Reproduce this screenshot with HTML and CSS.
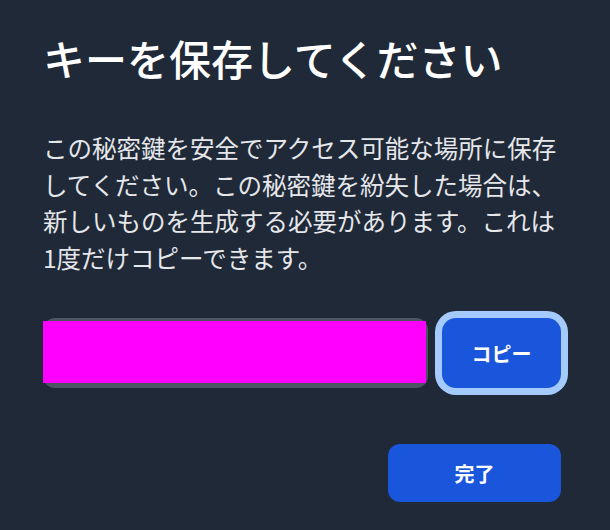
FILE: index.html
```html
<!DOCTYPE html>
<html lang="ja">
<head>
<meta charset="utf-8">
<link rel="stylesheet" href="styles.css">
</head>
<body>
<div class="dialog">
  <h1 class="title">キーを保存してください</h1>
  <p class="desc">この秘密鍵を安全でアクセス可能な場所に保存してください。この秘密鍵を紛失した場合は、新しいものを生成する必要があります。これは1度だけコピーできます。</p>
  <div class="key-row">
    <div class="key-field"><span class="key-redact"></span></div>
    <button class="btn btn-copy" type="button">コピー</button>
  </div>
  <div class="actions">
    <button class="btn btn-done" type="button">完了</button>
  </div>
</div>
</body>
</html>
```

FILE: styles.css
```css
html, body {
  margin: 0;
  padding: 0;
  background: #1f2937;
}
body {
  width: 610px;
  height: 530px;
  overflow: hidden;
  font-family: "Noto Sans CJK JP", "Noto Sans", sans-serif;
}
.dialog {
  padding: 33px 49px 0 43px;
  display: flex;
  flex-direction: column;
}
.title {
  margin: 0;
  font-size: 42px;
  line-height: 50px;
  font-weight: 500;
  color: #ffffff;
}
.desc {
  margin: 47px 0 0 0;
  font-size: 24.5px;
  line-height: 36.6px;
  font-weight: 400;
  color: #e5e7eb;
}
.key-row {
  margin-top: 42px;
  display: flex;
  gap: 14px;
  height: 70px;
}
.key-field {
  flex: 1;
  background: #4b5563;
  border-radius: 12px;
  padding: 3px 2px 5px 0;
  display: flex;
}
.key-redact {
  flex: 1;
  background: #ff00ff;
}
.btn {
  border: none;
  margin: 0;
  font-family: "Noto Sans CJK JP", "Noto Sans", sans-serif;
  font-size: 20px;
  font-weight: 700;
  color: #ffffff;
  background: #1a56db;
  padding: 0;
  cursor: pointer;
}
.btn-copy {
  width: 119px;
  border-radius: 14px;
  box-shadow: 0 0 0 7px #a4cafe;
}
.actions {
  margin-top: 56px;
  display: flex;
  justify-content: flex-end;
}
.btn-done {
  width: 173px;
  height: 58px;
  border-radius: 12px;
}
```
